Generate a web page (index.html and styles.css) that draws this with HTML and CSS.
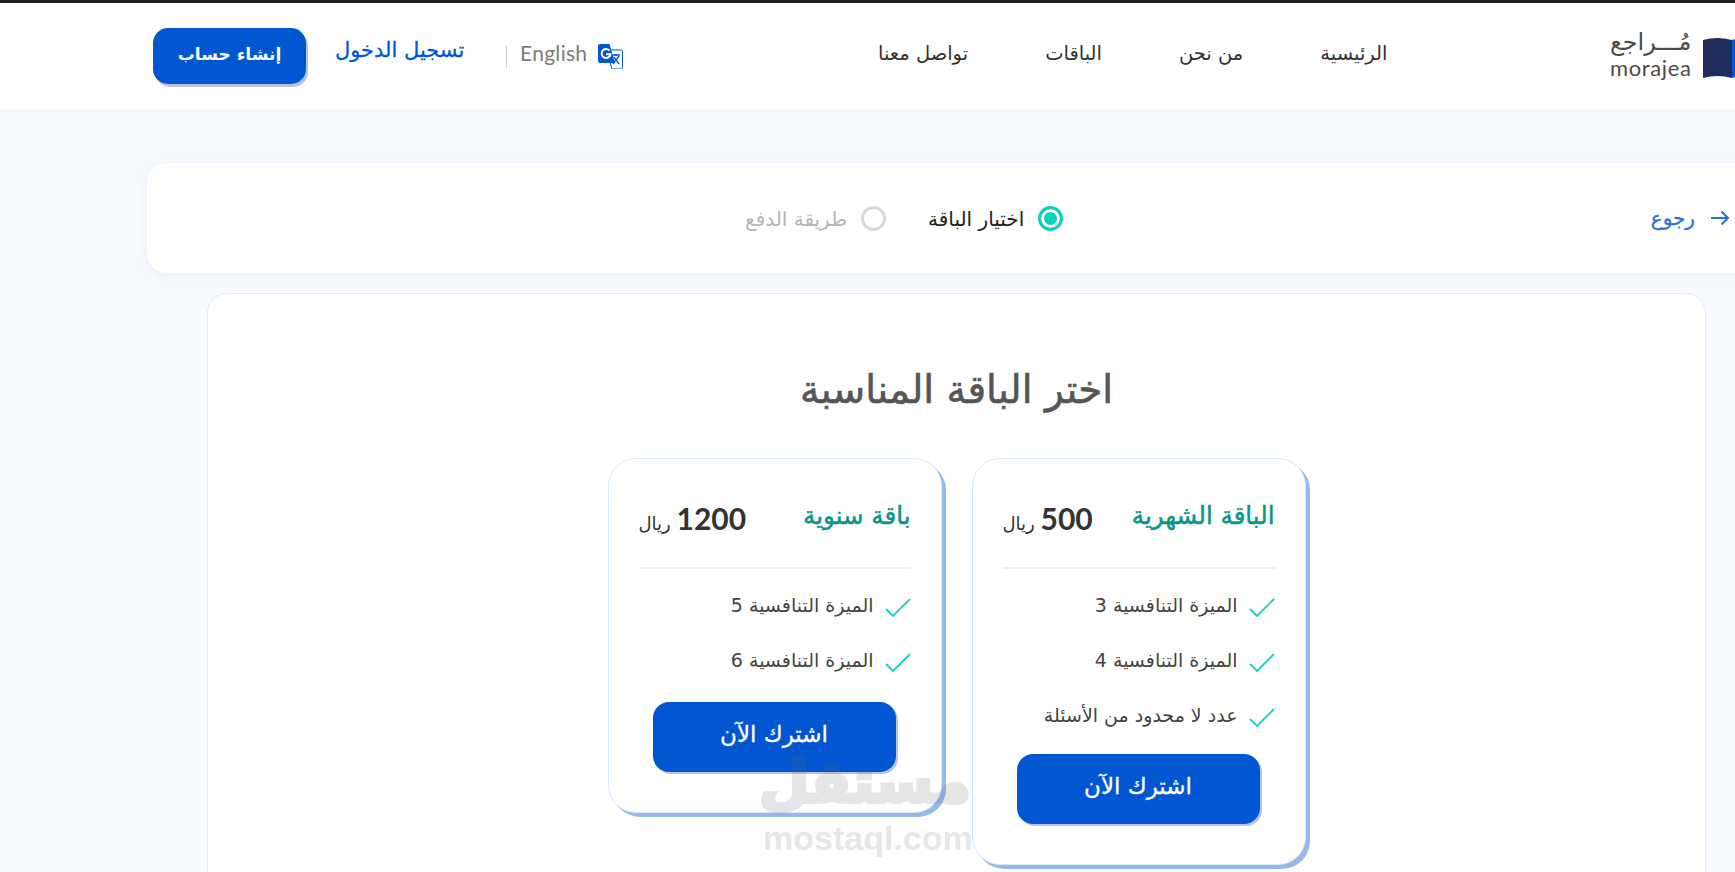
FILE: index.html
```html
<!DOCTYPE html>
<html lang="ar">
<head>
<meta charset="utf-8">
<title>مراجع</title>
<link rel="stylesheet" href="styles.css">
</head>
<body>
<div class="page">
  <header class="header">
    <a class="btn-signup">إنشاء حساب</a>
    <a class="login">تسجيل الدخول</a>
    <span class="sep"></span>
    <span class="lang">English</span>
    <svg class="translate" viewBox="0 0 25 25" width="25" height="25">
      <path d="M9 6h14a1.500 1.500 0 0 1 1.500 1.500v16a1.500 1.500 0 0 1-1.500 1.500h-9l-1-3z" fill="#fff" stroke="#0057d1" stroke-width="1"/>
      <path d="M2 0h9.500l5.500 19H2a2 2 0 0 1-2-2V2a2 2 0 0 1 2-2z" fill="#0057d1"/>
      <path d="M11.500 6.500a4.500 4.500 0 1 0 1 3.700H8" fill="none" stroke="#fff" stroke-width="2"/>
      <path d="M14 11h8M18 10v2M15 20l6-8M16 13l5 7" fill="none" stroke="#0057d1" stroke-width="1.300"/>
    </svg>
    <nav class="nav">
      <a>تواصل معنا</a>
      <a>الباقات</a>
      <a>من نحن</a>
      <a>الرئيسية</a>
    </nav>
    <div class="logo">
      <span class="logo-ar">مُـــراجع</span>
      <span class="logo-en">morajea</span>
    </div>
    <svg class="book" viewBox="0 0 60 44" width="60" height="44">
      <path d="M0 3q14-4 29 0v38q-15-4-29 0z" fill="#1f2c5c"/>
      <path d="M29 3q14-4 29 0v38q-15-4-29 0z" fill="#0057d1"/>
    </svg>
  </header>

  <section class="steps">
    <div class="step-group">
      <div class="step muted"><span class="step-label">طريقة الدفع</span><span class="radio"></span></div>
      <div class="step"><span class="step-label">اختيار الباقة</span><span class="radio on"></span></div>
    </div>
    <a class="back">
      <span>رجوع</span>
      <svg viewBox="0 0 20 16" width="20" height="16"><path d="M1 8h17M11.500 1.500 18 8l-6.500 6.500" fill="none" stroke="#2e6fd6" stroke-width="2"/></svg>
    </a>
  </section>

  <main class="panel">
    <h1 class="title">اختر الباقة المناسبة</h1>
    <div class="plans">
      <article class="plan">
        <div class="plan-head">
          <h2 class="plan-name">الباقة الشهرية</h2>
          <div class="price"><b>500</b> <span>ريال</span></div>
        </div>
        <ul class="features">
          <li><svg class="check" viewBox="0 0 26 19"><path d="M1 11l7 7L25 1" /></svg><span>الميزة التنافسية 3</span></li>
          <li><svg class="check" viewBox="0 0 26 19"><path d="M1 11l7 7L25 1" /></svg><span>الميزة التنافسية 4</span></li>
          <li><svg class="check" viewBox="0 0 26 19"><path d="M1 11l7 7L25 1" /></svg><span>عدد لا محدود من الأسئلة</span></li>
        </ul>
        <a class="cta">اشترك الآن</a>
      </article>
      <article class="plan plan-short">
        <div class="plan-head">
          <h2 class="plan-name">باقة سنوية</h2>
          <div class="price"><b>1200</b> <span>ريال</span></div>
        </div>
        <ul class="features">
          <li><svg class="check" viewBox="0 0 26 19"><path d="M1 11l7 7L25 1" /></svg><span>الميزة التنافسية 5</span></li>
          <li><svg class="check" viewBox="0 0 26 19"><path d="M1 11l7 7L25 1" /></svg><span>الميزة التنافسية 6</span></li>
        </ul>
        <a class="cta">اشترك الآن</a>
      </article>
    </div>
  </main>
</div>
<div class="watermark">
  <span class="wm-ar">مستقل</span>
  <span class="wm-en">mostaql.com</span>
</div>
</body>
</html>
```
FILE: styles.css
```css
* { box-sizing: border-box; }
html, body { margin: 0; height: 872px; overflow: hidden; }
body {
  background: #f6f9fe;
  font-family: "DejaVu Sans", "Noto Sans", sans-serif;
  color: #333;
  position: relative;
}
.page { width: 1913px; border-top: 3px solid #222; }
ul, h1, h2 { margin: 0; padding: 0; }

.header {
  height: 106px;
  background: #fff;
  display: flex;
  align-items: center;
  padding-left: 153px;
}
.btn-signup {
  width: 153px; height: 56px;
  margin-top: -1px;
  padding-bottom: 4px;
  display: flex; align-items: center; justify-content: center;
  background: #0057d1;
  color: #fff;
  font-size: 17px; font-weight: 700;
  border-radius: 15px;
  box-shadow: 2px 3px 0 #b7c3d8;
}
.login { margin-left: 29px; margin-top: -12px; width: 127px; color: #0057d1; font-size: 21px; -webkit-text-stroke: .3px #0057d1; white-space: nowrap; text-align: center; }
.sep { width: 1px; height: 22px; background: #c9ced6; margin-left: 44px; margin-top: 2px; }
.lang { margin-left: 13px; width: 66px; margin-top: -7px; color: #7b7b7b; font: 21px "Lato", sans-serif; letter-spacing: .3px; }
.translate { margin-left: 12px; }
.nav { display: flex; align-items: center; margin-left: 255px; margin-top: -6px; gap: 77px; font-size: 19.500px; color: #333; }
.logo { margin-left: 223px; width: 81px; display: flex; flex-direction: column; align-items: flex-end; color: #4f4a47; line-height: 1; margin-top: 0; }
.logo-ar { font-size: 24px; }
.logo-en { font: 400 22px/1.3 "Lato", sans-serif; letter-spacing: .6px; }
.book { margin-left: 12px; margin-top: 6px; flex: none; }

.steps {
  margin: 54px 147px 0;
  height: 110px;
  background: #fff;
  border-radius: 20px;
  box-shadow: 0 2px 8px rgba(30, 60, 120, .06);
  position: relative;
  display: flex;
  align-items: center;
  padding-left: 598px;
}
.step-group { display: flex; gap: 42px; }
.step { display: flex; align-items: center; gap: 14px; font-size: 20px; color: #222; }
.step.muted { color: #b5b5b5; }
.step-label { direction: rtl; margin-top: 2px; }
.radio { width: 25px; height: 25px; border-radius: 50%; border: 3px solid #d6d8e0; background: #fff; flex: none; }
.radio.on { border-color: #07cfc2; background: #07cfc2; box-shadow: inset 0 0 0 3px #fff; }
.back { margin-left: auto; margin-right: 36px; display: flex; align-items: center; gap: 15px; color: #2e6fd6; font-size: 20px; -webkit-text-stroke: .3px #2e6fd6; }

.panel {
  margin: 20px 207px 0;
  height: 800px;
  background: #fff;
  border: 1px solid #e5e9f0;
  border-radius: 20px;
  padding-top: 71px;
}
.title { text-align: center; font-size: 39px; line-height: 50px; font-weight: 400; -webkit-text-stroke: .6px #555; color: #555; direction: rtl; }
.plans { display: flex; direction: rtl; justify-content: center; align-items: flex-start; gap: 30px; margin-top: 43px; }
.plan {
  width: 334px;
  background: #fff;
  border: 1px solid #d8e8fb;
  border-radius: 28px;
  box-shadow: 4px 4px 0 #95b9ec;
  padding: 30px 30px 40px;
}
.plan-head {
  display: flex;
  justify-content: space-between;
  align-items: center;
  height: 80px;
  padding-bottom: 20px;
  border-bottom: 2px solid #ebf1ee;
}
.plan-name { font-size: 24.500px; font-weight: 400; -webkit-text-stroke: .5px #0f9488; color: #0f9488; white-space: nowrap; margin-top: -5px; }
.price { font-size: 18px; white-space: nowrap; color: #333; }
.price b { font: 700 30px "Lato", sans-serif; }
.features { list-style: none; margin-top: 9px; }
.features li { height: 55px; display: flex; align-items: center; gap: 11px; font-size: 19px; color: #444; }
.features span { margin-top: -2px; }
.check { width: 26px; height: 19px; flex: none; fill: none; stroke: #1ccfc4; stroke-width: 1.800; margin-top: 3px; }
.cta {
  display: flex; align-items: center; justify-content: center;
  width: 243px; height: 70px;
  margin: 11px 15px 0 0;
  padding-bottom: 6px;
  background: #0057d1;
  color: #fff;
  font-size: 23px;
  -webkit-text-stroke: .3px #fff;
  border-radius: 16px;
  box-shadow: 2px 2px 0 #b7c3d8;
}
.plan-short .cta { margin-top: 14px; }

.watermark {
  position: absolute;
  left: 763px; top: 744px;
  width: 208px;
  display: flex; flex-direction: column;
  color: #6e6e6e;
  opacity: .17;
  font-family: "Liberation Sans", sans-serif;
  font-weight: 700;
  pointer-events: none;
}
.wm-ar { font: 700 58px/76px "DejaVu Sans", sans-serif; -webkit-text-stroke: 4px #6e6e6e; direction: rtl; text-align: center; white-space: nowrap; }
.wm-en { font-size: 34px; line-height: 36px; white-space: nowrap; }
```
